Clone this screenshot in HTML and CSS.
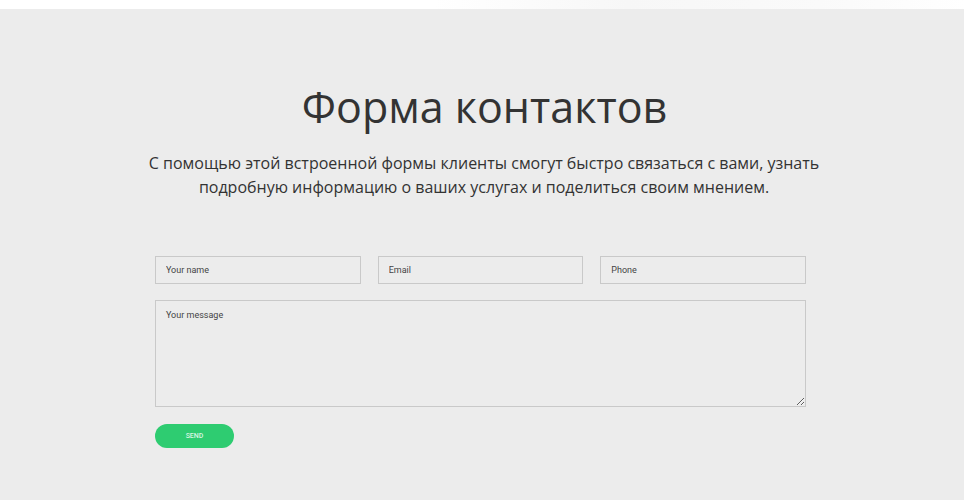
FILE: index.html
```html
<!DOCTYPE html>
<html lang="ru">
<head>
    <meta charset="UTF-8">
    <meta name="viewport" content="width=device-width, initial-scale=1.0">
    <title>Форма контактов</title>
    <link rel="stylesheet" href="styles.css">
</head>
<body>
    <div class="topbar"></div>
    <section class="contacts">
        <h1 class="title">Форма контактов</h1>
        <p class="lead">С помощью этой встроенной формы клиенты смогут быстро связаться с вами, узнать подробную информацию о ваших услугах и поделиться своим мнением.</p>
        <form class="form">
            <div class="row">
                <input class="field" type="text" placeholder="Your name">
                <input class="field" type="email" placeholder="Email">
                <input class="field" type="tel" placeholder="Phone">
            </div>
            <textarea class="field message" placeholder="Your message"></textarea>
            <button class="send" type="button">SEND</button>
        </form>
    </section>
</body>
</html>
```

FILE: styles.css
```css
body{
    margin: 0;
    padding: 0;
    background-color: #ffffff;
    font-family: "Open Sans", "Noto Sans", sans-serif;
    color: #333;
}
.topbar{
    height: 9px;
    background: linear-gradient(90deg, #fff 45%, #f7f7f7 65%, #fafafa 85%, #fff 100%);
}
.contacts{
    background-color: #ececec;
    height: 491px;
    margin-right: 1px;
    padding-top: 72px;
    box-sizing: border-box;
    text-align: center;
}
.title{
    margin: 0 0 0 5px;
    font-size: 43px;
    font-weight: 400;
    line-height: 52px;
    color: #333;
}
.lead{
    width: 690px;
    margin: 18px auto 0;
    padding-left: 4px;
    font-size: 16px;
    line-height: 24px;
    color: #333;
}
.form{
    width: 651px;
    margin: 57px 0 0 calc(50% - 327px);
    text-align: left;
}
.row{
    display: flex;
    gap: 17px;
    margin-bottom: 16px;
}
.field{
    flex: 1;
    box-sizing: border-box;
    height: 28px;
    padding: 0 10px;
    border: 1px solid #c9c9c9;
    background: #ececec;
    font-family: Roboto, sans-serif;
    font-size: 9px;
    color: #444;
    outline: none;
}
.field::placeholder{
    color: #444;
}
.message{
    display: block;
    width: 100%;
    height: 107px;
    padding-top: 9px;
    resize: vertical;
}
.send{
    display: block;
    margin-top: 17px;
    width: 79px;
    height: 24px;
    border: none;
    border-radius: 12px;
    background-color: #2ecc71;
    color: #d8f5e3;
    font-family: Roboto, sans-serif;
    font-size: 7px;
    font-weight: 500;
    cursor: pointer;
}
```
